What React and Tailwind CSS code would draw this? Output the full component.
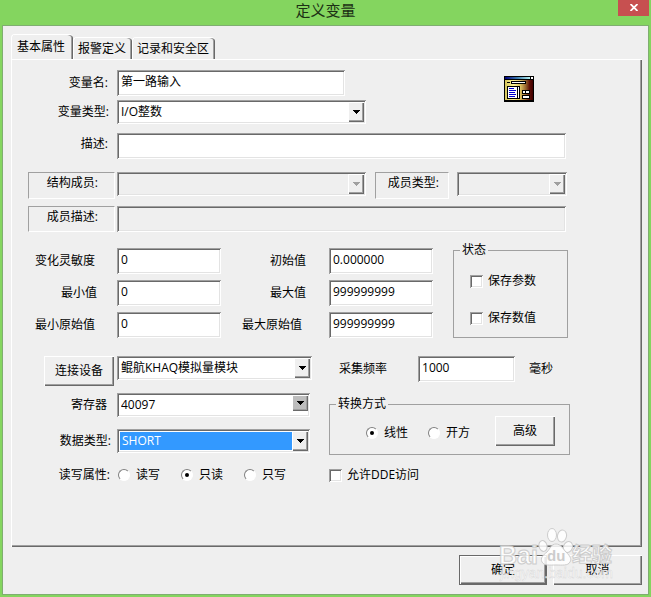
import { useState } from 'react'
import clsx from 'clsx'

const sunken = 'shadow-[inset_1px_1px_0_#a0a0a0,inset_-1px_-1px_0_#ffffff,inset_2px_2px_0_#696969,inset_-2px_-2px_0_#e3e3e3]'
const raised = 'shadow-[inset_1px_1px_0_#ffffff,inset_-1px_-1px_0_#696969,inset_-2px_-2px_0_#a0a0a0]'
const etched = 'border border-t-[#a0a0a0] border-l-[#a0a0a0] border-r-white border-b-white'

function Label({ htmlFor, className, children }) {
  return (
    <label htmlFor={htmlFor} className={clsx('shrink-0 text-right', className)}>
      {children}
    </label>
  )
}

function TextField({ id, value, className, disabled = false, ...rest }) {
  return (
    <input
      id={id}
      type="text"
      defaultValue={value}
      disabled={disabled}
      className={clsx('h-[26px] min-w-0 px-1 pb-1 outline-none', sunken, disabled ? 'bg-[#efefef]' : 'bg-white', className)}
      {...rest}
    />
  )
}

function SelectField({ id, options, className, disabled = false, highlight = false, dark = false, ...rest }) {
  return (
    <div className={clsx('relative flex h-6 p-0.5', sunken, disabled ? 'bg-[#efefef]' : 'bg-white', className)}>
      <select
        id={id}
        disabled={disabled}
        className={clsx(
          'min-w-0 flex-1 appearance-none pr-5 pl-0.5 outline-none',
          highlight ? 'border border-white bg-[#3399ff] text-white' : 'bg-transparent',
        )}
        {...rest}
      >
        {options.map((option) => (
          <option key={option}>{option}</option>
        ))}
      </select>
      <span
        className={clsx(
          'pointer-events-none absolute top-0.5 right-0.5 flex w-4 items-center justify-center',
          raised,
          dark ? 'h-4 bg-[#bdbdbd]' : 'h-5 bg-[#efefef]',
        )}
      >
        <svg width="7" height="4" viewBox="0 0 7 4" shapeRendering="crispEdges" aria-hidden="true">
          <path d="M0 0h7v1H6v1H5v1H4v1H3V3H2V2H1V1H0z" fill={disabled ? '#a0a0a0' : '#000'} />
        </svg>
      </span>
    </div>
  )
}

function Radio({ name, label, defaultChecked }) {
  return (
    <label className="flex items-center gap-1.5">
      <input
        type="radio"
        name={name}
        defaultChecked={defaultChecked}
        className="flex size-3 appearance-none items-center justify-center rounded-full border border-[#808080] border-r-white border-b-white bg-white checked:before:size-1 checked:before:rounded-full checked:before:bg-black"
      />
      {label}
    </label>
  )
}

function Checkbox({ label }) {
  return (
    <label className="flex items-center gap-[5px]">
      <input
        type="checkbox"
        className={clsx('size-[13px] appearance-none bg-white checked:bg-[#696969]', sunken)}
      />
      {label}
    </label>
  )
}

function Button({ className, children }) {
  return (
    <button type="button" className={clsx('h-[30px] bg-[#efefef]', raised, className)}>
      {children}
    </button>
  )
}

function Group({ title, className, children }) {
  return (
    <fieldset className={clsx('border border-[#a0a0a0] px-1.5', className)}>
      <legend className="px-0.5 leading-3">{title}</legend>
      {children}
    </fieldset>
  )
}

function VariableIcon() {
  return (
    <svg width="30" height="26" viewBox="0 0 30 26" shapeRendering="crispEdges" role="img" aria-label="变量">
      <defs>
        <linearGradient id="bar" x1="0" x2="1">
          <stop offset="0" stopColor="#000080" />
          <stop offset="0.5" stopColor="#3c7cae" />
          <stop offset="1" stopColor="#b8f4f4" />
        </linearGradient>
        <linearGradient id="face" x1="0" x2="1">
          <stop offset="0" stopColor="#d4c45c" />
          <stop offset="0.3" stopColor="#fff494" />
          <stop offset="0.55" stopColor="#dcc060" />
          <stop offset="0.75" stopColor="#94602c" />
          <stop offset="0.88" stopColor="#601008" />
          <stop offset="1" stopColor="#400000" />
        </linearGradient>
      </defs>
      <rect width="30" height="26" fill="#000" />
      <rect x="1" y="1" width="25" height="2" fill="url(#bar)" />
      <rect x="27" y="1" width="2" height="2" fill="#fff" />
      <rect x="1" y="4" width="28" height="20" fill="url(#face)" />
      <rect x="3" y="6" width="3" height="1" fill="#000" />
      <rect x="7" y="5" width="15" height="3" fill="#000" />
      <rect x="8" y="6" width="13" height="1" fill="#fff" />
      <rect x="3" y="10" width="13" height="13" fill="#000" />
      <rect x="4" y="11" width="9" height="11" fill="#fff" />
      <rect x="14" y="11" width="1" height="11" fill="#fff" />
      <path d="M5 12h5v1H5zM5 14h7v1H5zM5 16h6v1H5zM5 18h7v1H5zM5 20h6v1H5z" fill="#0000d0" />
      <rect x="18" y="14" width="8" height="4" fill="#000" />
      <path d="M19 15h2v2h-2zM22 15h3v2h-3z" fill="#fff" />
      <rect x="18" y="19" width="8" height="4" fill="#000" />
      <rect x="19" y="20" width="6" height="2" fill="#fff" />
    </svg>
  )
}

function Watermark() {
  return (
    <svg
      width="120"
      height="58"
      viewBox="0 0 120 58"
      className="pointer-events-none absolute right-8 bottom-3 font-['Liberation_Sans','Noto_Sans_CJK_SC',sans-serif]"
      aria-hidden="true"
    >
      <g fill="#fff" fillOpacity="0.85" stroke="#cccccc" strokeWidth="1">
        <text x="0" y="37" fontSize="25" fontWeight="700">Bai</text>
        <ellipse cx="44" cy="19" rx="4" ry="5.5" transform="rotate(-15 44 19)" />
        <ellipse cx="53" cy="8" rx="4.5" ry="6.5" />
        <ellipse cx="63" cy="9" rx="4.5" ry="6" transform="rotate(12 63 9)" />
        <ellipse cx="69" cy="20" rx="4.5" ry="5.5" transform="rotate(20 69 20)" />
        <path d="M57 17c5 0 7 5 10 8 4 4 6 7 4 10-2 4-8 3-14 3s-12 1-14-3c-2-4 1-7 5-10 3-3 4-8 9-8z" />
        <text x="73" y="35" fontSize="20" fontWeight="700">经验</text>
      </g>
      <text x="48" y="34" fontSize="15" fontWeight="700" fill="#cccccc">du</text>
      <text x="1" y="51" fontSize="14" fill="#fff" fillOpacity="0.8" stroke="#d4d4d4" strokeWidth="0.4">jingyan.baidu.com</text>
    </svg>
  )
}

const TABS = ['基本属性', '报警定义', '记录和安全区']

function Tabs() {
  const [active, setActive] = useState(0)

  return (
    <div role="tablist" className="flex items-end pt-2">
      {TABS.map((tab, index) => (
        <button
          key={tab}
          type="button"
          role="tab"
          aria-selected={index === active}
          onClick={() => setActive(index)}
          className={clsx(
            'rounded-t-sm border-t border-l border-t-white border-l-white shadow-[inset_-1px_0_0_#696969,inset_-2px_0_0_#a0a0a0]',
            index === active ? 'h-[25px] pr-2 pl-[5px]' : 'h-[22px] pr-1.5 pl-1',
          )}
        >
          {tab}
        </button>
      ))}
    </div>
  )
}

function NumberRow({ id, label, value, labelClass }) {
  return (
    <div className="flex items-center">
      <Label htmlFor={id} className={labelClass}>{label}</Label>
      <TextField id={id} value={value} className="w-[104px]" />
    </div>
  )
}

export default function App() {
  return (
    <div className="relative flex min-h-screen flex-col bg-[#84d55f] px-0.5 pb-0.5 font-['Open_Sans','Noto_Sans_CJK_SC',sans-serif] text-[12px] leading-4 text-black">
      <header className="grid h-[25px] grid-cols-[1fr_auto_1fr]">
        <h1 className="col-start-2 text-[15px] leading-5 text-[#1c3014]">定义变量</h1>
        <button
          type="button"
          aria-label="关闭"
          className="flex h-4 w-[31px] items-center justify-center justify-self-end bg-[#c75050]"
        >
          <svg width="8" height="7" viewBox="0 0 8 7" className="mb-0.5" aria-hidden="true">
            <path d="M0.5 0l7 7M7.5 0l-7 7" stroke="#fff" strokeWidth="1.8" />
          </svg>
        </button>
      </header>

      <main className="flex flex-1 flex-col border border-[#7fae70] bg-[#efefef] pr-1.5 pb-[9px] pl-2">
        <Tabs />

        <section className="flex flex-1 flex-col border-t border-l border-white pt-2.5 shadow-[inset_-1px_-1px_0_#696969,inset_-2px_-2px_0_#a0a0a0]">
          <div className="flex">
            <div>
              <div className="flex items-center">
                <Label htmlFor="name" className="w-[105px] pr-[9px]">变量名:</Label>
                <TextField id="name" value="第一路输入" className="w-[228px]" />
              </div>
              <div className="mt-1 flex items-center">
                <Label htmlFor="type" className="w-[105px] pr-2">变量类型:</Label>
                <SelectField id="type" options={['I/O整数', 'I/O实数']} className="w-[249px]" />
              </div>
            </div>
            <div className="mt-1.5 ml-[138px]">
              <VariableIcon />
            </div>
          </div>

          <div className="mt-[9px] flex items-center">
            <Label htmlFor="desc" className="w-[105px] pr-[9px] pb-1">描述:</Label>
            <TextField id="desc" value="" className="w-[449px]" />
          </div>

          <div className="mt-[13px] flex items-start pl-4">
            <Label htmlFor="member" className={clsx('mr-0.5 h-[27px] w-[87px] pt-0.5 pr-4', etched)}>结构成员:</Label>
            <SelectField id="member" options={['']} disabled className="w-[249px]" />
            <Label htmlFor="memberType" className={clsx('mr-2 ml-[9px] h-[27px] w-[74px] pt-0.5 pr-[9px]', etched)}>成员类型:</Label>
            <SelectField id="memberType" options={['']} disabled className="w-[110px]" />
          </div>

          <div className="mt-[7px] flex items-start pl-4">
            <Label htmlFor="memberDesc" className={clsx('mr-0.5 h-[26px] w-[87px] pt-0.5 pr-4', etched)}>成员描述:</Label>
            <TextField id="memberDesc" value="" disabled className="w-[449px]" />
          </div>

          <div className="mt-3 flex">
            <div className="flex flex-col gap-1.5 pt-1">
              <NumberRow id="sensitivity" label="变化灵敏度" value="0" labelClass="w-[105px] pr-[22px]" />
              <NumberRow id="min" label="最小值" value="0" labelClass="w-[105px] pr-5" />
              <NumberRow id="minRaw" label="最小原始值" value="0" labelClass="w-[105px] pr-[22px]" />
            </div>
            <div className="flex flex-col gap-1.5 pt-1">
              <NumberRow id="initial" label="初始值" value="0.000000" labelClass="w-[108px] pr-[23px]" />
              <NumberRow id="max" label="最大值" value="999999999" labelClass="w-[108px] pr-[23px]" />
              <NumberRow id="maxRaw" label="最大原始值" value="999999999" labelClass="w-[108px] pr-[27px]" />
            </div>
            <Group title="状态" className="ml-5 w-[115px]">
              <div className="flex flex-col gap-[21px] pt-[17px] pl-2.5">
                <Checkbox label="保存参数" />
                <Checkbox label="保存数值" />
              </div>
            </Group>
          </div>

          <div className="mt-[18px] flex">
            <div className="w-[317px]">
              <div className="flex items-start pl-8">
                <Button className="mr-[3px] w-[70px]">连接设备</Button>
                <SelectField id="device" aria-label="连接设备" options={['鲲航KHAQ模拟量模块']} className="w-[195px]" />
              </div>
              <div className="mt-[7px] flex items-center">
                <Label htmlFor="register" className="w-[105px] pr-2.5">寄存器</Label>
                <SelectField id="register" options={['40097']} dark className="w-[193px]" />
              </div>
              <div className="mt-3 flex items-center">
                <Label htmlFor="dataType" className="w-[105px] pr-1.5">数据类型:</Label>
                <SelectField id="dataType" options={['SHORT', 'USHORT', 'LONG']} highlight className="w-[193px]" />
              </div>
              <div role="radiogroup" aria-labelledby="accessLabel" className="mt-3.5 flex items-center">
                <span id="accessLabel" className="w-[106px] shrink-0 pr-2 text-right">读写属性:</span>
                <div className="flex gap-[21px]">
                  <Radio name="access" label="读写" />
                  <Radio name="access" label="只读" defaultChecked />
                  <Radio name="access" label="只写" />
                </div>
              </div>
            </div>

            <div>
              <div className="flex items-center pl-2.5">
                <Label htmlFor="rate">采集频率</Label>
                <TextField id="rate" value="1000" className="mr-3.5 ml-[31px] w-[97px]" />
                <span>毫秒</span>
              </div>
              <Group title="转换方式" className="mt-4 w-[241px]">
                <div className="flex items-center pt-1.5 pb-2 pl-[30px]">
                  <div className="flex flex-1 gap-5 pt-1">
                    <Radio name="convert" label="线性" defaultChecked />
                    <Radio name="convert" label="开方" />
                  </div>
                  <Button className="mr-2 w-[60px]">高级</Button>
                </div>
              </Group>
              <div className="mt-3">
                <Checkbox label="允许DDE访问" />
              </div>
            </div>
          </div>
        </section>

        <footer className="mt-2 flex justify-end gap-1.5">
          <Button className="w-[88px] border border-[#696969]">确定</Button>
          <Button className="w-[89px]">取消</Button>
        </footer>
      </main>

      <Watermark />
    </div>
  )
}
